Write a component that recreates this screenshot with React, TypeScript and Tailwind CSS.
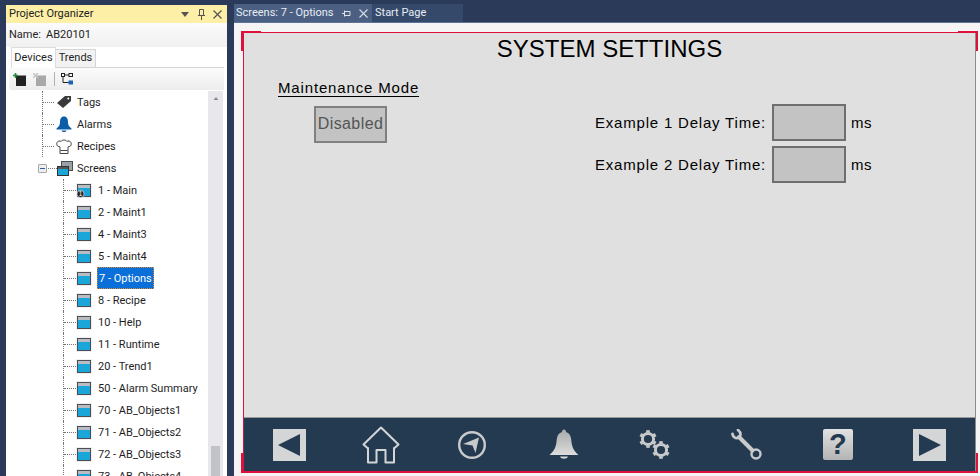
import React from "react";

const ui = { fontFamily: 'Roboto, sans-serif' };

function ScreenIcon({ badge }: { badge?: boolean }) {
  return (
    <svg width="16" height="15" viewBox="0 0 16 15" className="shrink-0">
      <rect x="0" y="0" width="16" height="15" fill="#f0f0f0" />
      <rect x="1.5" y="1.5" width="13" height="12" fill="#1ba6da" stroke="#4a4f55" />
      <rect x="2" y="2" width="12" height="3" fill="#b9bcc0" />
      {badge && (
        <>
          <circle cx="4.5" cy="11" r="3.6" fill="#222" stroke="#fff" strokeWidth="0.6" />
          <text x="4.5" y="13.4" fontSize="6.5" fill="#fff" textAnchor="middle" fontFamily="Liberation Sans">1</text>
        </>
      )}
    </svg>
  );
}

function TagIcon() {
  return (
    <svg width="16" height="14" viewBox="0 0 16 14">
      <path d="M1 8 L9 1 L15 1 L15 6 L7 13 Z" fill="#3a3a3a" />
      <circle cx="12.3" cy="3.6" r="1" fill="#fff" />
    </svg>
  );
}

function BlueBell() {
  return (
    <svg width="16" height="17" viewBox="0 0 16 17">
      <path d="M8 0.5 C5 0.5 4 3 4 6 C4 9 3 10.5 0.5 12.5 L0.5 13.5 L15.5 13.5 L15.5 12.5 C13 10.5 12 9 12 6 C12 3 11 0.5 8 0.5 Z" fill="#0c5ea6" />
      <path d="M5.5 14.5 H10.5 C10 16.5 6 16.5 5.5 14.5 Z" fill="#0c5ea6" />
    </svg>
  );
}

function HatIcon() {
  return (
    <svg width="16" height="15" viewBox="0 0 16 15" fill="#fff" stroke="#444" strokeWidth="1">
      <path d="M4 8 L1.5 7 C0.2 5.5 0.5 2.5 3 2 C4 2 4.5 2 5 2.5 C6 0.5 10 0.5 11 2.5 C11.5 2 12 2 13 2 C15.5 2.5 15.8 5.5 14.5 7 L12 8 L12 14.5 L4 14.5 Z" />
      <path d="M4.5 11.5 H11.5" fill="none" />
    </svg>
  );
}

function ScreensIcon() {
  return (
    <svg width="16" height="15" viewBox="0 0 16 15">
      <rect x="4.5" y="0.5" width="11" height="9" fill="#9aa0a6" stroke="#4a4f55" />
      <rect x="0.5" y="5.5" width="11" height="9" fill="#1ba6da" stroke="#333" />
      <rect x="1" y="6" width="10" height="2" fill="#555" />
    </svg>
  );
}

type Item = { label: string; icon: React.ReactNode };

function Level1Row({ label, icon }: Item) {
  return (
    <div className="flex h-[22px] items-center whitespace-nowrap">
      <div className="ml-[36px] flex h-full w-[12px] items-center border-l border-dotted border-[#777]">
        <div className="w-full border-t border-dotted border-[#777]" />
      </div>
      <div className="flex w-[23px] justify-center pr-[3px]">{icon}</div>
      <span className="pt-[2px]">{label}</span>
    </div>
  );
}

function ScreenRow({ label, badge, selected }: { label: string; badge?: boolean; selected?: boolean }) {
  return (
    <div className="flex h-[22px] items-center whitespace-nowrap">
      <div className="ml-[57px] flex h-full w-[13px] items-center border-l border-dotted border-[#777]">
        <div className="w-full border-t border-dotted border-[#777]" />
      </div>
      <ScreenIcon badge={badge} />
      {selected ? (
        <span className="ml-[5px] flex h-[22px] w-[57px] items-center border border-dotted border-[#e08a2a] bg-[#0a6fd8] pl-px pt-[2px] text-white">
          {label}
        </span>
      ) : (
        <span className="ml-[6px] pt-[2px]">{label}</span>
      )}
    </div>
  );
}

const screens = [
  "2 - Maint1", "4 - Maint3", "5 - Maint4", "7 - Options", "8 - Recipe", "10 - Help", "11 - Runtime",
  "20 - Trend1", "50 - Alarm Summary", "70 - AB_Objects1", "71 - AB_Objects2", "72 - AB_Objects3", "73 - AB_Objects4",
];

function Organizer() {
  return (
    <div className="ml-[6px] mt-[5px] flex h-[471px] w-[221px] shrink-0 flex-col bg-white text-[11px] text-[#1e1e1e]" style={ui}>
      <div className="flex h-[18px] items-center bg-[#fdf0a6] pl-[3px] pr-[4px] text-[#222]">
        <span className="flex-1 pt-px">Project Organizer</span>
        <svg width="8" height="5" viewBox="0 0 8 5" className="mr-[8px]"><path d="M0 0 H8 L4 5 Z" fill="#555" /></svg>
        <svg width="9" height="11" viewBox="0 0 9 11" className="mr-[7px]" fill="none" stroke="#555"><path d="M2.5 .5 H6.5 V6.5 H2.5 Z M1 6.5 H8 M4.5 7 V11" /></svg>
        <svg width="9" height="9" viewBox="0 0 9 9" className="mr-[1px]" stroke="#555" strokeWidth="1.2"><path d="M.5 .5 L8.5 8.5 M8.5 .5 L.5 8.5" /></svg>
      </div>
      <div className="flex h-[24px] items-center bg-gradient-to-b from-[#fbfbfb] to-[#f0f0f0] pl-[3px]">
        <span>Name:</span>
        <span className="ml-[5px]">AB20101</span>
      </div>
      <div className="flex h-[21px] items-end pl-[5px]">
        <div className="flex h-[21px] w-[45px] items-center justify-center border-x border-t border-[#dcdcdc] bg-white">Devices</div>
        <div className="flex h-[19px] w-[40px] items-center justify-center border-r border-t border-b border-[#d4d4d4] bg-[#f2f2f2]">Trends</div>
        <div className="h-px w-[128px] bg-[#d4d4d4]" />
      </div>
      <div className="mb-px ml-[3px] flex h-[22px] w-[215px] items-center rounded-bl-[3px] bg-gradient-to-b from-[#fbfbfb] to-[#ededed] pl-[4px]">
        <svg width="13" height="13" viewBox="0 0 13 13">
          <rect x="3" y="2.5" width="10" height="10.5" fill="#222" />
          <path d="M2.5 0 V5 M0 2.5 H5" stroke="#1e8a3c" strokeWidth="1.6" />
        </svg>
        <svg width="13" height="13" viewBox="0 0 13 13" className="ml-[7px]">
          <rect x="3" y="2.5" width="10" height="10.5" fill="#a8a8a8" />
          <path d="M0 0 L5 5 M5 0 L0 5" stroke="#c4c4c4" strokeWidth="1.4" />
        </svg>
        <div className="ml-[8px] h-[14px] w-px bg-[#b0b0b0]" />
        <svg width="12" height="12" viewBox="0 0 12 12" className="ml-[6px]">
          <rect x="0.5" y="0.5" width="3" height="3" fill="none" stroke="#222" />
          <rect x="8" y="0.5" width="3.5" height="3" fill="none" stroke="#222" />
          <rect x="7.5" y="7.5" width="4.5" height="4" fill="#1c63b8" />
          <path d="M2 4 V9.5 H7.5 M4 2 H8" stroke="#222" fill="none" />
        </svg>
      </div>
      <div className="flex min-h-0 flex-1">
        <div className="w-[202px] overflow-hidden">
          <Level1Row label="Tags" icon={<TagIcon />} />
          <Level1Row label="Alarms" icon={<BlueBell />} />
          <Level1Row label="Recipes" icon={<HatIcon />} />
          <div className="flex h-[22px] items-center">
            <div className="ml-[32px] flex h-[9px] w-[9px] items-center justify-center rounded-[1px] border border-[#a8a8a8] bg-[#efefef]">
              <div className="h-px w-[5px] bg-[#2a5fa8]" />
            </div>
            <div className="ml-px w-[9px] border-t border-dotted border-[#777]" />
            <div className="flex w-[20px]"><ScreensIcon /></div>
            <span className="pt-[2px]">Screens</span>
          </div>
          <ScreenRow label="1 - Main" badge />
          {screens.map((s) => (
            <ScreenRow key={s} label={s} selected={s === "7 - Options"} />
          ))}
        </div>
        <div className="flex w-[15px] flex-col items-center bg-[#e8e8ec]">
          <svg width="8" height="5" viewBox="0 0 8 5" className="mt-[6px]"><path d="M4 0 L8 5 H0 Z" fill="#868999" /></svg>
          <div className="mt-[346px] h-[30px] w-[9px] shrink-0 bg-[#c2c3c9]" />
        </div>
      </div>
    </div>
  );
}

function PlayBtn({ back }: { back?: boolean }) {
  return (
    <svg width="33" height="32" viewBox="0 0 33 32">
      <rect width="33" height="32" fill="#d3d5d7" />
      <path d={back ? "M5 16 L27 5 V27 Z" : "M6 5 L28 16 L6 27 Z"} fill="#243a50" />
    </svg>
  );
}

function Gear({ cx, cy }: { cx: number; cy: number }) {
  const teeth = [0, 60, 120, 180, 240, 300];
  return (
    <g>
      <circle cx={cx} cy={cy} r={5.6} fill="none" stroke="#c8c9ca" strokeWidth="3" />
      {teeth.map((a) => (
        <rect key={a} x={cx - 1.8} y={cy - 8.8} width="3.6" height="2.4" fill="#c8c9ca" transform={`rotate(${a} ${cx} ${cy})`} />
      ))}
    </g>
  );
}

const icons: React.ReactNode[] = [
  <PlayBtn back key="a" />,
  <svg key="b" width="38" height="38" viewBox="0 0 38 38" fill="none" stroke="#d3d5d7" strokeWidth="2" strokeLinejoin="round">
    <path d="M19 1.5 L36.5 18.5 L32.5 22 L32 22 V36.5 H23.5 V24 H14.5 V36.5 H6 V22 L5.5 22 L1.5 18.5 Z" />
  </svg>,
  <svg key="c" width="30" height="30" viewBox="0 0 30 30">
    <circle cx="15" cy="15" r="12.8" fill="none" stroke="#c9cacb" strokeWidth="2.4" />
    <path d="M6 14 L22 7.5 L18.5 23 L15.5 15.5 Z" fill="#c9cacb" />
  </svg>,
  <svg key="d" width="30" height="31" viewBox="0 0 30 31">
    <defs>
      <linearGradient id="bellg" x1="0" y1="0" x2="0" y2="1">
        <stop offset="0" stopColor="#a9aaab" />
        <stop offset="1" stopColor="#dcdcdc" />
      </linearGradient>
    </defs>
    <path d="M15 0.5 C13.5 0.5 13 2 13 3 C8.5 4.5 8 8 7.5 13 C7 18 5 22 0.5 26 L29.5 26 C25 22 23 18 22.5 13 C22 8 21.5 4.5 17 3 C17 2 16.5 0.5 15 0.5 Z" fill="url(#bellg)" />
    <path d="M11 27.5 H19 C18 30.5 12 30.5 11 27.5 Z" fill="#d8d8d8" />
  </svg>,
  <svg key="e" width="32" height="30" viewBox="0 0 32 30">
    <Gear cx={9} cy={9} />
    <Gear cx={22} cy={20} />
  </svg>,
  <svg key="f" width="31" height="31" viewBox="0 0 31 31" fill="none" stroke="#c9cacb" strokeLinecap="round">
    <path d="M8 8 L21.5 21.5" strokeWidth="4" />
    <path d="M1.5 5 C2 8.5 5 10 8 8.5 C10 6.5 10 3.5 7.5 1.5 L7 1" strokeWidth="2.8" />
    <circle cx="25" cy="25" r="4.5" strokeWidth="2.4" />
  </svg>,
  <div key="g" className="flex h-[31px] w-[30px] items-center justify-center rounded-[2px] bg-gradient-to-b from-[#e2e2e2] to-[#b4b4b4] text-[29px] font-bold leading-none text-[#243a50]" style={{ fontFamily: '"Liberation Sans", sans-serif' }}>?</div>,
  <PlayBtn key="h" />,
];

function Corner({ className }: { className: string }) {
  return <div className={`absolute h-[20px] w-[20px] border-[#e0103c] ${className}`} />;
}

function ValueRow({ n }: { n: number }) {
  return (
    <div className="flex h-[37px] items-center">
      <span className="w-[172px] whitespace-nowrap pt-px tracking-[0.8px]">Example {n} Delay Time:</span>
      <div className="ml-[5px] h-[37px] w-[74px] border-2 border-[#6f6f6f] bg-[#c3c3c3]" />
      <span className="ml-[5px] pt-px tracking-[0.4px]">ms</span>
    </div>
  );
}

function Canvas() {
  return (
    <div className="relative ml-[9px] mt-[9px] flex h-[441px] w-[733px] flex-col border-x border-t border-x-[#e0103c] border-t-[#e0103c] border-r-[#8c8c8c] border-b-2 border-b-[#e0103c] bg-[#e0e0e0] text-black" style={{ fontFamily: '"Liberation Sans", sans-serif' }}>
      <Corner className="-left-[3px] -top-[2px] border-l-[2px] border-t-[2px]" />
      <Corner className="-right-[3px] -top-[2px] border-r-[2px] border-t-[2px]" />
      <Corner className="-bottom-[2px] -left-[3px] border-b-[2px] border-l-[2px]" />
      <Corner className="-bottom-[2px] -right-[3px] border-b-[2px] border-r-[2px]" />
      <div className="mt-[2px] h-[28px] text-center text-[24px] leading-[27px]">SYSTEM SETTINGS</div>
      <div className="flex flex-1 text-[15px]">
        <div className="ml-[34px] w-[317px]">
          <div className="mt-[15px] h-[19px] w-[141px] whitespace-nowrap border-b border-black text-[15px] leading-[19px] tracking-[0.85px]">Maintenance Mode</div>
          <div className="ml-[36px] mt-[9px] flex h-[37px] w-[73px] items-center justify-center border-2 border-[#808080] bg-[#c3c3c3] pb-px text-[16px] tracking-[0.4px] text-[#555]">Disabled</div>
        </div>
        <div className="mt-[41px] flex flex-col gap-[5px]">
          <ValueRow n={1} />
          <ValueRow n={2} />
        </div>
      </div>
      <div className="grid h-[54px] grid-cols-8 items-center justify-items-center border-t border-[#9a9a9a] bg-[#243a50]">
        {icons}
      </div>
    </div>
  );
}

export default function App() {
  return (
    <div className="flex h-[476px] w-[980px] overflow-hidden bg-[#2b3a58]">
      <Organizer />
      <div className="ml-[7px] flex min-w-0 flex-1 flex-col">
        <div className="mt-[4px] flex h-[18px] text-[11px] text-[#e8edf4]" style={ui}>
          <div className="flex w-[138px] items-center whitespace-nowrap bg-[#4a5f82] pl-[2px]">
            <span className="flex-1">Screens: 7 - Options</span>
            <svg width="9" height="9" viewBox="0 0 9 9" className="mr-[8px]" stroke="#e0e4ea" fill="none"><path d="M0 4.5 H2.5 M2.5 1.5 V7.5 M2.5 2.5 H8 V6.5 H2.5" /></svg>
            <svg width="9" height="9" viewBox="0 0 9 9" className="mr-[4px]" stroke="#d8dde4" strokeWidth="1.1"><path d="M.5 .5 L8.5 8.5 M8.5 .5 L.5 8.5" /></svg>
          </div>
          <div className="flex w-[91px] items-center bg-[#35496b] pl-[3px]">Start Page</div>
        </div>
        <div className="flex-1 border-t border-[#5d7498] bg-[#f5f5f5]">
          <Canvas />
        </div>
      </div>
    </div>
  );
}
